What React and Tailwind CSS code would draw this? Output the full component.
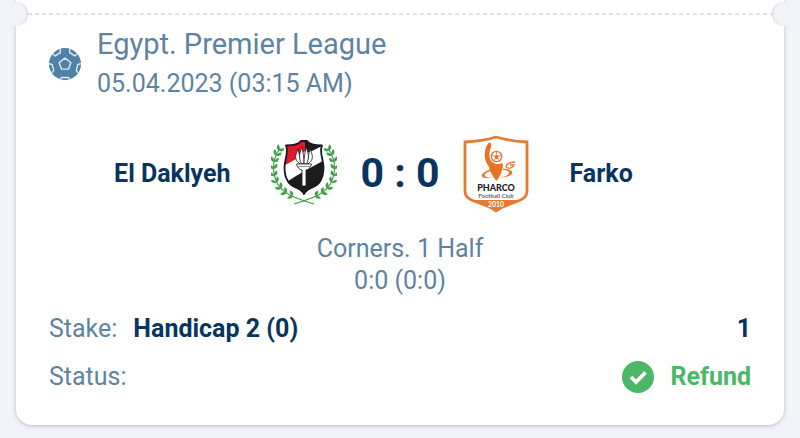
import React from 'react'

const bet = {
  league: 'Egypt. Premier League',
  date: '05.04.2023 (03:15 AM)',
  home: 'El Daklyeh',
  away: 'Farko',
  score: '0 : 0',
  period: 'Corners. 1 Half',
  periodScore: '0:0 (0:0)',
  pick: 'Handicap 2 (0)',
  odds: '1',
  status: 'Refund',
}

function BallIcon() {
  return (
    <svg viewBox="0 0 34 34" className="size-8 shrink-0" aria-hidden="true">
      <clipPath id="ball"><circle cx="17" cy="17" r="17" /></clipPath>
      <circle cx="17" cy="17" r="17" fill="#4f82a6" />
      <g clipPath="url(#ball)" fill="none" stroke="#dceaf3" strokeWidth="1.5" strokeLinejoin="round">
        <path d="M17 10.8 23.2 15.4 20.8 22.4H13.2L10.8 15.4Z" />
        <path d="M4 6 6.5 8.4 12 5 12-1" />
        <path d="M22-1 22 5 27.5 8.4 30 6" />
        <path d="M-1 16.5 3.4 17.5 5 24 2 27.5" />
        <path d="M35 16.5 30.6 17.5 29 24 32 27.5" />
        <path d="M12 35 13 31.4H21L22 35" />
      </g>
    </svg>
  )
}

// x, y on the stem and the direction it grows in
const leaves = [
  [21, 57, 200], [14.5, 54, 212], [9, 49.5, 226], [4.6, 43.5, 240], [2.4, 37, 254],
  [1.6, 30, 266], [2.2, 23, 280], [4, 16.5, 295], [6.8, 11.5, 304],
]

function Branch() {
  return (
    <g fill="#45a04b">
      <path d="M42 65C22 59 8 54 3.4 40-.5 29 2 18 8 9" fill="none" stroke="#45a04b" strokeWidth="1.2" />
      {leaves.map(([x, y, angle]) => (
        <g key={y} transform={`translate(${x} ${y}) rotate(${angle})`}>
          <path d="M0 0Q3-3.4 6.4 0 3 2.6 0 0Z" transform="rotate(-40)" />
          <path d="M0 0Q3-2.6 6.4 0 3 3.4 0 0Z" transform="rotate(40)" />
        </g>
      ))}
    </g>
  )
}

const shield = 'M35 2H29C27 5 22 6.5 14 6.5C17 12 13 19 12.5 28C12.5 42 18 46 25 49C29 51 31 53 32 55C33 53 35 51 39 49C46 46 51.5 42 51.5 28C51 19 47 12 50 6.5C42 6.5 37 5 35 2Z'

function HomeLogo() {
  return (
    <svg viewBox="-1 0 66 70" className="h-[70px] w-[66px]" role="img" aria-label="El Daklyeh">
      <clipPath id="shield"><path d={shield} /></clipPath>
      <Branch />
      <g transform="matrix(-1 0 0 1 64 0)"><Branch /></g>
      <g clipPath="url(#shield)">
        <path d="M10 0H54V60H10Z" fill="#fff" />
        <path d="M10 0H33V12L24 20 10 28Z" fill="#e0182b" />
        <path d="M33 0H54V5L42 11 33 15Z" fill="#1d1b1e" />
        <path d="M10 46 24 37 38 29 54 20V60H10Z" fill="#1d1b1e" />
      </g>
      <path d={shield} fill="none" stroke="#1b191c" strokeWidth="1.8" strokeLinejoin="round" />
      <g fill="#fff" stroke="#1b191c" strokeWidth="0.8" strokeLinejoin="round">
        <path d="M28 25C21 20 24 15 26 10 27 15 28 19 30 25Z" />
        <path d="M36 25C43 20 40 15 38 10 37 15 36 19 34 25Z" />
        <path d="M29.5 25C26 18 28 13 30 8 31 14 32 18 32 25Z" />
        <path d="M34.500 25C38 18 36 13 34 8 33 14 32 18 32 25Z" />
        <path d="M24.5 25H39.5C39 28 37 30.5 34 31V47H30V31C27 30.5 25 28 24.5 25Z" />
      </g>
      <path d="M26 27.5H38" stroke="#777" strokeWidth="0.8" />
    </svg>
  )
}

const badge = 'M2 7C13 6.5 23 5 33 2C43 5 53 6.5 64 7V56C64 68 46 66 33 76C20 66 2 68 2 56Z'

function AwayLogo() {
  return (
    <svg viewBox="0 0 66 78" className="h-[78px] w-[66px]" role="img" aria-label="Farko">
      <clipPath id="badge"><path d={badge} /></clipPath>
      <g clipPath="url(#badge)">
        <path d="M0 0H66V78H0Z" fill="#fff" />
        <path d="M0 65H66V78H0Z" fill="#e67a31" />
      </g>
      <path d={badge} fill="none" stroke="#e67a31" strokeWidth="2.8" />
      <path d="M25.5 8C28 7 29 9 28 12 26 17 26 21 27 24 29 29 35 30 39.5 28 41 32 38 40 33.5 46 29 41 27 36 25.5 31 21 25 21 19 23 12Z" fill="#e8742a" />
      <circle cx="33.5" cy="21.5" r="5.2" fill="#fff" stroke="#e8742a" strokeWidth="1.3" />
      <path d="M33.5 19.5 35.8 21 35 24H32L31.2 21Z" fill="#e8742a" />
      <path d="M33.5 19V16.5M36 21 38 20M35 24 36.5 26M32 24 30.5 26M31 21 29 20" stroke="#e8742a" strokeWidth="0.8" />
      <path d="M27 34.5C20 37 17 40 19.5 42 22 44 28 42.5 31 41.5 27 42.5 23 42.5 22 41 21 39 24 37 28 36Z" fill="#e67a31" />
      <path d="M40 33.5C47 34 52 37 48 40 45 42 40 42.5 37 42.5 42 41.5 46 40 46 38 46 36 43 35 40 35Z" fill="#e67a31" />
      <path d="M52 27C46 27 42 30 43.5 32.5 46 34 50 33 51 30H47" fill="none" stroke="#e67a31" strokeWidth="1.4" />
      <text x="33" y="56" textAnchor="middle" fontFamily="Lato, sans-serif" fontSize="9" fontWeight="900" fill="#222">PHARCO</text>
      <text x="33" y="63" textAnchor="middle" fontFamily="Lato, sans-serif" fontSize="6" fill="#667">Football Club</text>
      <text x="33" y="72" textAnchor="middle" fontFamily="Lato, sans-serif" fontSize="7" fill="#fff">2010</text>
    </svg>
  )
}

function CheckIcon() {
  return (
    <svg viewBox="0 0 32 32" className="size-8" aria-hidden="true">
      <circle cx="16" cy="16" r="16" fill="#4ab866" />
      <path d="M9 16 14 21 23.5 11.5" fill="none" stroke="#fff" strokeWidth="3.8" />
    </svg>
  )
}

function Perforation() {
  return (
    <div className="relative flex h-7 items-center px-3">
      <div className="h-0.5 w-full bg-[repeating-linear-gradient(90deg,#e2e3ea_0_4px,transparent_4px_7px)]" />
      <span className="absolute top-0.5 -left-3 size-6 rounded-full bg-[#f3f4f9] shadow-[inset_-2px_0_2px_-1px_#cfd0d6]" />
      <span className="absolute top-0.5 -right-3 size-6 rounded-full bg-[#f3f4f9] shadow-[inset_2px_0_2px_-1px_#cfd0d6]" />
    </div>
  )
}

export default function App() {
  return (
    <div className="min-h-screen bg-[#f3f4f9] px-4 pb-3 font-['Roboto',sans-serif] text-[25px] text-[#5d84a2]">
      <article className="rounded-b-2xl bg-white pb-8 shadow-[0_1px_4px_#b9bbc4]">
        <Perforation />
        <div className="px-[33px]">
          <header className="flex items-center gap-4">
            <BallIcon />
            <div>
              <h1 className="text-[29px] leading-8">{bet.league}</h1>
              <p className="mt-2 leading-8">{bet.date}</p>
            </div>
          </header>

          <div className="mt-[35px] grid grid-cols-[1fr_auto_1fr] items-center gap-10 font-bold text-[#08355f]">
            <span className="text-right">{bet.home}</span>
            <div className="flex items-center gap-6">
              <HomeLogo />
              <span className="text-[41px]">{bet.score}</span>
              <AwayLogo />
            </div>
            <span>{bet.away}</span>
          </div>

          <div className="mt-5 text-center leading-8">
            <p>{bet.period}</p>
            <p>{bet.periodScore}</p>
          </div>

          <dl className="mt-4 flex flex-col gap-4 leading-8">
            <div className="flex items-center gap-4">
              <dt>Stake:</dt>
              <dd className="flex flex-1 justify-between font-bold text-[#08355f]">
                <span>{bet.pick}</span>
                <span>{bet.odds}</span>
              </dd>
            </div>
            <div className="flex items-center justify-between">
              <dt>Status:</dt>
              <dd className="flex items-center gap-4 font-bold text-[#4ab866]">
                <CheckIcon />
                {bet.status}
              </dd>
            </div>
          </dl>
        </div>
      </article>
    </div>
  )
}
